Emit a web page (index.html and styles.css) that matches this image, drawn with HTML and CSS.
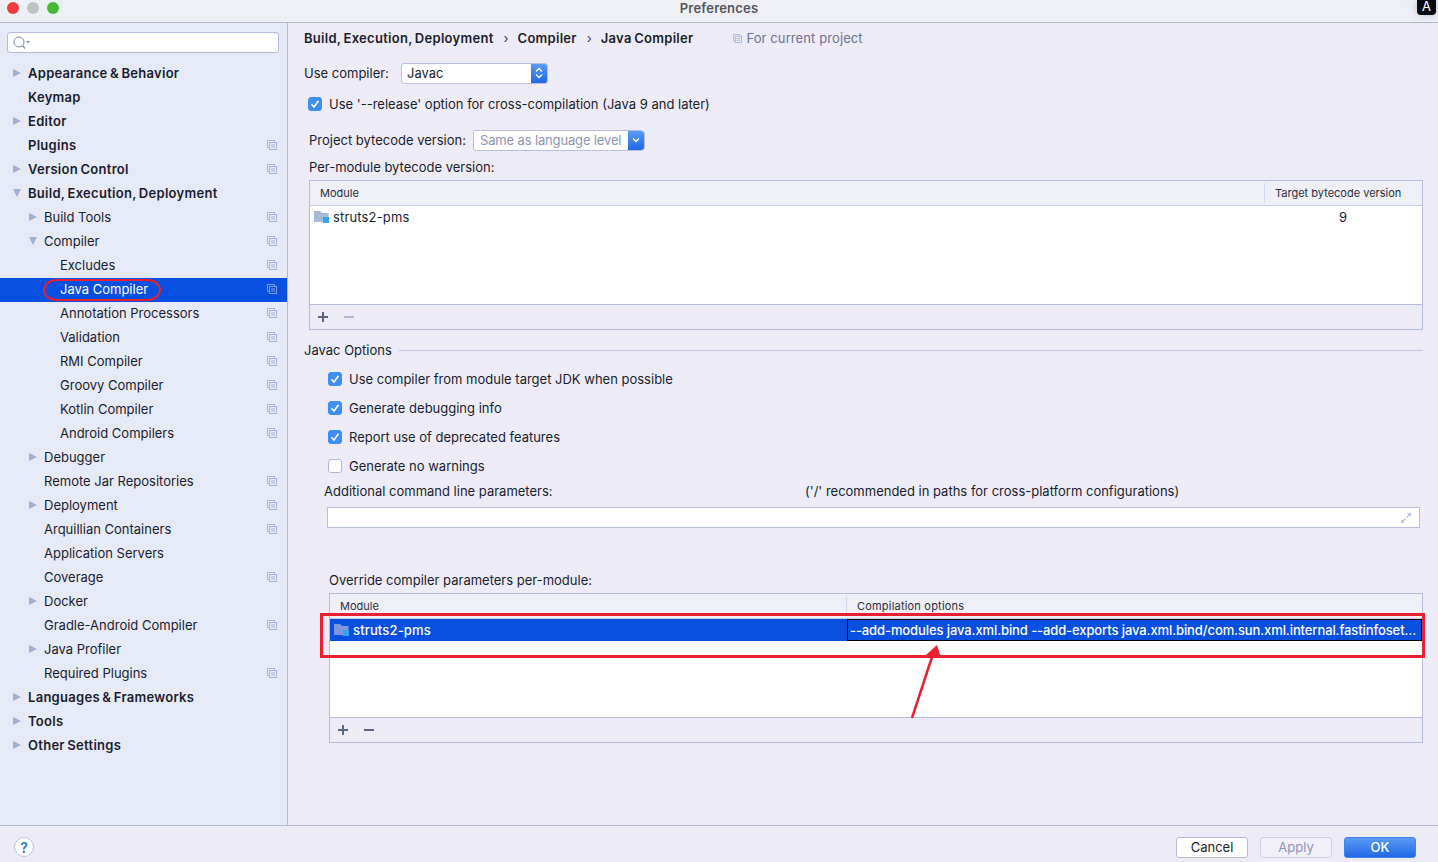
FILE: index.html
```html
<!DOCTYPE html>
<html lang="en">
<head>
<meta charset="utf-8">
<title>Preferences</title>
<link rel="stylesheet" href="styles.css">
</head>
<body>
<svg class="defs" width="0" height="0">
  <symbol id="copy" viewBox="0 0 10 10">
    <path d="M2.5 .5H.5V7.5H2.5M.5 .5H7.5V2.5" fill="none" stroke="currentColor"/>
    <rect x="2.5" y="2.5" width="7" height="7" fill="none" stroke="currentColor"/>
    <path d="M4 5H8M4 7H8" stroke="currentColor"/>
  </symbol>
  <symbol id="folder" viewBox="0 0 16 14">
    <path d="M0 1H6L8 3H14.500V12H0Z" fill="currentColor"/>
    <rect x="9" y="7" width="6" height="6" fill="#38a3ee"/>
  </symbol>
  <symbol id="check" viewBox="0 0 14 14">
    <path d="M3.500 7.200L6 10L10.500 3.800" fill="none" stroke="#fff" stroke-width="1.500"/>
  </symbol>
</svg>

<header class="titlebar">
  <div class="lights"><i class="light red"></i><i class="light grey"></i><i class="light green"></i></div>
  <span class="title">Preferences</span>
  <span class="badge">A</span>
</header>

<div class="body">
  <nav class="sidebar">
    <div class="search">
      <svg class="search-icon" width="18" height="14" viewBox="0 0 18 14"><circle cx="6" cy="6" r="5" fill="none" stroke="#7f8cae"/><path d="M9.500 9.500L12 12.500" stroke="#7f8cae" stroke-width="1.200"/><path d="M13 5H17L15 7.500Z" fill="#7f8cae"/></svg>
    </div>
    <ul class="tree">
      <li class="row l0"><i class="tri right"></i><span class="label">Appearance &amp; Behavior</span></li>
      <li class="row l0"><i class="tri"></i><span class="label">Keymap</span></li>
      <li class="row l0"><i class="tri right"></i><span class="label">Editor</span></li>
      <li class="row l0"><i class="tri"></i><span class="label">Plugins</span><svg class="copy"><use href="#copy"/></svg></li>
      <li class="row l0"><i class="tri right"></i><span class="label">Version Control</span><svg class="copy"><use href="#copy"/></svg></li>
      <li class="row l0"><i class="tri down"></i><span class="label">Build, Execution, Deployment</span></li>
      <li class="row l1"><i class="tri right"></i><span class="label">Build Tools</span><svg class="copy"><use href="#copy"/></svg></li>
      <li class="row l1"><i class="tri down"></i><span class="label">Compiler</span><svg class="copy"><use href="#copy"/></svg></li>
      <li class="row l2"><span class="label">Excludes</span><svg class="copy"><use href="#copy"/></svg></li>
      <li class="row l2 active"><span class="label">Java Compiler</span><svg class="copy"><use href="#copy"/></svg></li>
      <li class="row l2"><span class="label">Annotation Processors</span><svg class="copy"><use href="#copy"/></svg></li>
      <li class="row l2"><span class="label">Validation</span><svg class="copy"><use href="#copy"/></svg></li>
      <li class="row l2"><span class="label">RMI Compiler</span><svg class="copy"><use href="#copy"/></svg></li>
      <li class="row l2"><span class="label">Groovy Compiler</span><svg class="copy"><use href="#copy"/></svg></li>
      <li class="row l2"><span class="label">Kotlin Compiler</span><svg class="copy"><use href="#copy"/></svg></li>
      <li class="row l2"><span class="label">Android Compilers</span><svg class="copy"><use href="#copy"/></svg></li>
      <li class="row l1"><i class="tri right"></i><span class="label">Debugger</span></li>
      <li class="row l1"><i class="tri"></i><span class="label">Remote Jar Repositories</span><svg class="copy"><use href="#copy"/></svg></li>
      <li class="row l1"><i class="tri right"></i><span class="label">Deployment</span><svg class="copy"><use href="#copy"/></svg></li>
      <li class="row l1"><i class="tri"></i><span class="label">Arquillian Containers</span><svg class="copy"><use href="#copy"/></svg></li>
      <li class="row l1"><i class="tri"></i><span class="label">Application Servers</span></li>
      <li class="row l1"><i class="tri"></i><span class="label">Coverage</span><svg class="copy"><use href="#copy"/></svg></li>
      <li class="row l1"><i class="tri right"></i><span class="label">Docker</span></li>
      <li class="row l1"><i class="tri"></i><span class="label">Gradle-Android Compiler</span><svg class="copy"><use href="#copy"/></svg></li>
      <li class="row l1"><i class="tri right"></i><span class="label">Java Profiler</span></li>
      <li class="row l1"><i class="tri"></i><span class="label">Required Plugins</span><svg class="copy"><use href="#copy"/></svg></li>
      <li class="row l0"><i class="tri right"></i><span class="label">Languages &amp; Frameworks</span></li>
      <li class="row l0"><i class="tri right"></i><span class="label">Tools</span></li>
      <li class="row l0"><i class="tri right"></i><span class="label">Other Settings</span></li>
    </ul>
  </nav>

  <main class="content">
    <div class="crumbs">
      <b>Build, Execution, Deployment</b><span class="sep">›</span><b>Compiler</b><span class="sep">›</span><b>Java Compiler</b>
      <span class="scope"><svg class="copy small"><use href="#copy"/></svg>For current project</span>
    </div>

    <div class="line compiler">
      <span class="label-compiler">Use compiler:</span>
      <div class="select s-javac"><span class="value">Javac</span><span class="stepper"><svg width="10" height="14" viewBox="0 0 10 14"><path d="M2 5.500L5 2.500L8 5.500M2 8.500L5 11.500L8 8.500" fill="none" stroke="#fff" stroke-width="1.300"/></svg></span></div>
    </div>

    <label class="line check release"><span class="box on"><svg width="14" height="14"><use href="#check"/></svg></span>Use '--release' option for cross-compilation (Java 9 and later)</label>

    <div class="line bytecode">
      <span class="label-bytecode">Project bytecode version:</span>
      <div class="select s-level"><span class="value muted">Same as language level</span><span class="stepper"><svg width="10" height="10" viewBox="0 0 10 10"><path d="M2 3.500L5 6.500L8 3.500" fill="none" stroke="#fff" stroke-width="1.300"/></svg></span></div>
    </div>

    <div class="line per-module">Per-module bytecode version:</div>

    <section class="table t-top">
      <div class="thead"><span class="th grow">Module</span><span class="th target">Target bytecode version</span></div>
      <div class="tbody">
        <div class="tr"><svg class="folder"><use href="#folder"/></svg><span class="grow">struts2-pms</span><span class="num">9</span></div>
      </div>
      <div class="tools"><span class="plus"></span><span class="minus off"></span></div>
    </section>

    <div class="group"><span>Javac Options</span><i class="rule"></i></div>

    <label class="line opt first"><span class="box on"><svg width="14" height="14"><use href="#check"/></svg></span>Use compiler from module target JDK when possible</label>
    <label class="line opt"><span class="box on"><svg width="14" height="14"><use href="#check"/></svg></span>Generate debugging info</label>
    <label class="line opt"><span class="box on"><svg width="14" height="14"><use href="#check"/></svg></span>Report use of deprecated features</label>
    <label class="line opt"><span class="box"></span>Generate no warnings</label>

    <div class="line params"><span class="params-label">Additional command line parameters:</span><span>('/' recommended in paths for cross-platform configurations)</span></div>
    <div class="input"><svg width="12" height="12" viewBox="0 0 12 12"><path d="M7 1H11V5L9.500 3.500L7 6L6 5L8.500 2.500ZM5 11H1V7L2.500 8.500L5 6L6 7L3.500 9.500Z" fill="#b9c2e4"/></svg></div>

    <div class="line override">Override compiler parameters per-module:</div>

    <section class="table t-bottom">
      <div class="thead"><span class="th col-module">Module</span><span class="th grow">Compilation options</span></div>
      <div class="tbody">
        <div class="tr selected"><span class="cell-module"><svg class="folder"><use href="#folder"/></svg>struts2-pms</span><span class="cell-edit">--add-modules java.xml.bind --add-exports java.xml.bind/com.sun.xml.internal.fastinfoset...</span></div>
      </div>
      <div class="tools"><span class="plus"></span><span class="minus"></span></div>
    </section>
  </main>
</div>

<footer class="footer">
  <span class="help">?</span>
  <div class="buttons">
    <button class="btn">Cancel</button>
    <button class="btn disabled">Apply</button>
    <button class="btn primary">OK</button>
  </div>
</footer>

<div class="mark mark-ellipse"></div>
<div class="mark mark-rect"></div>
<svg class="mark mark-arrow" width="40" height="80" viewBox="0 0 40 80"><path d="M4 76L25 12" stroke="#e8202f" stroke-width="2.500"/><path d="M29 3L33 16L18 13Z" fill="#e8202f"/></svg>
</body>
</html>
```

FILE: styles.css
```css
* { box-sizing: border-box; }
html, body { margin: 0; padding: 0; height: 862px; overflow: hidden; }
body {
  position: relative;
  display: flex;
  flex-direction: column;
  font-family: Inter, "Noto Sans", sans-serif;
  font-size: 13px;
  color: #1a1d2e;
  background: #edecf6;
}
.defs { position: absolute; }
i { font-style: normal; }

.titlebar {
  position: relative;
  flex: 0 0 23px;
  background: #eeeff5;
  border-bottom: 1px solid #b4bac2;
  display: flex;
  align-items: center;
  justify-content: center;
}
.title { font-weight: 600; color: #54565e; margin-top: -7px; letter-spacing: .2px; }
.lights { position: absolute; left: 7px; top: 2px; display: flex; gap: 8px; }
.light { width: 12px; height: 12px; border-radius: 50%; }
.red { background: #ee3b3f; }
.grey { background: #bcc4c2; }
.green { background: #43ba33; }
.badge {
  position: absolute; right: 2px; top: 0;
  width: 19px; height: 15px;
  background: #0a0b12; color: #fff;
  border-radius: 0 0 4px 4px;
  box-shadow: 0 0 8px rgba(100,110,170,.35);
  font-size: 13px; line-height: 13px; text-align: center;
}

.body { flex: 1; display: flex; min-height: 0; }
.sidebar {
  flex: 0 0 288px;
  background: #e6e9f6;
  border-right: 1px solid #b4b9d6;
  padding-top: 9px;
}
.search {
  margin-left: 7px;
  width: 272px; height: 21px;
  background: #fff;
  border: 1px solid #b4bbdc;
  border-radius: 3px;
  padding: 3px 0 0 5px;
  display: flex;
}
.tree { list-style: none; margin: 9px 0 0; padding: 0; }
.row { height: 24px; display: flex; align-items: center; padding-bottom: 2px; }
.l0 { padding-left: 13px; font-weight: 600; letter-spacing: .28px; word-spacing: -1px; }
.l1 { padding-left: 29px; }
.l2 { padding-left: 60px; }
.tri { width: 15px; flex: none; display: block; height: 0; border: 0; position: relative; }
.tri.right::before, .tri.down::before { content: ""; position: absolute; width: 0; height: 0; }
.tri.right::before { left: 0; top: -4px; border-left: 8px solid #a4aecf; border-top: 4.5px solid transparent; border-bottom: 4.5px solid transparent; }
.tri.down::before { left: 0; top: -4px; border-top: 8px solid #a4aecf; border-left: 4.5px solid transparent; border-right: 4.5px solid transparent; }
.label { flex: 1; }
.copy { width: 10px; height: 10px; margin-right: 10px; flex: none; color: #a7b3da; }
.active { background: #0a50e0; color: #fff; }
.active .copy { color: #7f9be8; }

.content { flex: 1; min-width: 0; padding-left: 16px; padding-right: 15px; }
.line { display: flex; align-items: center; height: 20px; }
.crumbs { height: 30px; display: flex; align-items: center; }
.crumbs b { font-weight: 600; letter-spacing: .28px; word-spacing: -1px; }
.sep { margin: 0 9px 0 10px; color: #3d4052; }
.scope { margin-left: 40px; color: #6c7290; display: flex; align-items: center; letter-spacing: .1px; }
.copy.small { width: 9px; height: 9px; margin-right: 4px; }

.compiler { margin-top: 10px; }
.label-compiler { width: 97px; flex: none; }
.label-bytecode { width: 164px; flex: none; }
.select {
  display: flex; height: 21px;
  border: 1px solid #b8bfdc; border-radius: 3px;
  background: #fff; overflow: hidden;
}
.s-javac { width: 147px; }
.s-level { width: 172px; border-radius: 2px 4px 4px 2px; }
.value { flex: 1; padding-left: 5px; line-height: 19px; }
.muted { color: #8d93b8; padding-left: 6px; letter-spacing: -.15px; }
.stepper {
  width: 16px; flex: none;
  background: linear-gradient(#5a9bf3, #2068e6);
  display: flex; align-items: center; justify-content: center;
}
.box {
  flex: none; width: 14px; height: 14px; border-radius: 3px;
  background: #fff; border: 1px solid #b3b9d2; margin-right: 7px;
  display: inline-flex;
}
.box.on { background: #3f8ff0; border-color: #3f8ff0; }
.box.on svg { margin: -1px; }
.release { margin-top: 11px; padding-left: 4px; }
.bytecode { margin-top: 16px; padding-left: 5px; }
.per-module { margin-top: 7px; padding-left: 5px; }

.table { border: 1px solid #b6bddc; background: #fff; display: flex; flex-direction: column; }
.t-top { margin: 3px 0 0 5px; height: 150px; }
.t-bottom { margin: 3px 0 0 25px; height: 150px; }
.thead { height: 25px; flex: none; background: #efeff8; border-bottom: 1px solid #c6cce6; display: flex; font-size: 11px; color: #2b2e3e; padding-bottom: 1px; }
.th { display: flex; align-items: center; padding-left: 10px; border-left: 1px solid #d4d8ec; margin: 2px 0 1px; }
.th:first-child { border-left: 0; }
.t-bottom .th.grow { letter-spacing: .2px; }
.grow { flex: 1; }
.target { width: 158px; flex: none; }
.tbody { flex: 1; }
.tr { display: flex; align-items: center; height: 22px; padding-left: 4px; letter-spacing: .15px; }
.folder { width: 16px; height: 14px; margin-right: 3px; color: #a9b7d9; flex: none; }
.num { width: 83px; flex: none; }
.tools { height: 25px; flex: none; background: #edecf6; border-top: 1px solid #b6bddc; display: flex; align-items: center; gap: 16px; padding-left: 8px; }
.plus, .minus { position: relative; width: 10px; height: 10px; flex: none; }
.plus::before, .minus::before { content: ""; position: absolute; left: 0; right: 0; top: 4px; height: 2px; background: #5c6484; }
.plus::after { content: ""; position: absolute; top: 0; bottom: 0; left: 4px; width: 2px; background: #5c6484; }
.minus.off::before { background: #b1b8d6; }

.group { display: flex; align-items: center; height: 20px; margin-top: 10px; }
.rule { flex: 1; height: 1px; background: #c3c9e3; margin-left: 7px; }
.opt { padding-left: 24px; height: 20px; margin-top: 9px; }
.params { margin-top: 5px; padding-left: 20px; }
.params-label { width: 481px; flex: none; }
.input {
  margin: 6px 3px 0 23px; height: 21px; width: 1093px;
  background: #fff; border: 1px solid #b8bfdc;
  display: flex; align-items: center; justify-content: flex-end; padding-right: 7px;
}
.override { margin-top: 42px; padding-left: 25px; }

.col-module { width: 516px; flex: none; }
.selected { background: #0a50e0; color: #fff; padding-left: 0; }
.cell-module { width: 517px; flex: none; display: flex; align-items: center; padding-left: 4px; font-weight: 500; }
.selected .folder { color: #7f95de; }
.cell-edit {
  flex: 1; height: 22px; min-width: 0;
  border: 1px solid #000; line-height: 20px;
  padding-left: 2px; white-space: nowrap; overflow: hidden; font-weight: 500; letter-spacing: -.1px;
}

.footer {
  flex: 0 0 37px;
  border-top: 1px solid #b4b9d6;
  display: flex; align-items: center; justify-content: space-between;
  padding: 0 22px 0 14px;
}
.help {
  width: 20px; height: 20px; border-radius: 50%;
  background: #fff; border: 1px solid #bcc2dc; color: #2d6fe0;
  font-weight: 600; font-size: 14px;
  display: flex; align-items: center; justify-content: center;
  margin-top: 6px;
}
.buttons { display: flex; gap: 12px; margin-top: 6px; }
.btn {
  width: 72px; height: 21px; padding: 0;
  font: inherit;
  border: 1px solid #b4bad6; border-radius: 3px;
  background: #fff; color: #1a1d2e;
}
.btn.disabled { background: #f1f0f9; color: #8d93b8; border-color: #cdd1e6; }
.btn.primary { background: linear-gradient(#5a9bf3, #2068e6); border-color: #3f80ea; color: #fff; font-weight: 500; }

.mark { position: absolute; pointer-events: none; }
.mark-ellipse { left: 43px; top: 279px; width: 118px; height: 22px; border: 2.5px solid #e8202f; border-radius: 14px / 11px; }
.mark-rect { left: 320px; top: 613px; width: 1105px; height: 45px; border: 3px solid #e8202f; }
.mark-arrow { left: 908px; top: 642px; }
```
